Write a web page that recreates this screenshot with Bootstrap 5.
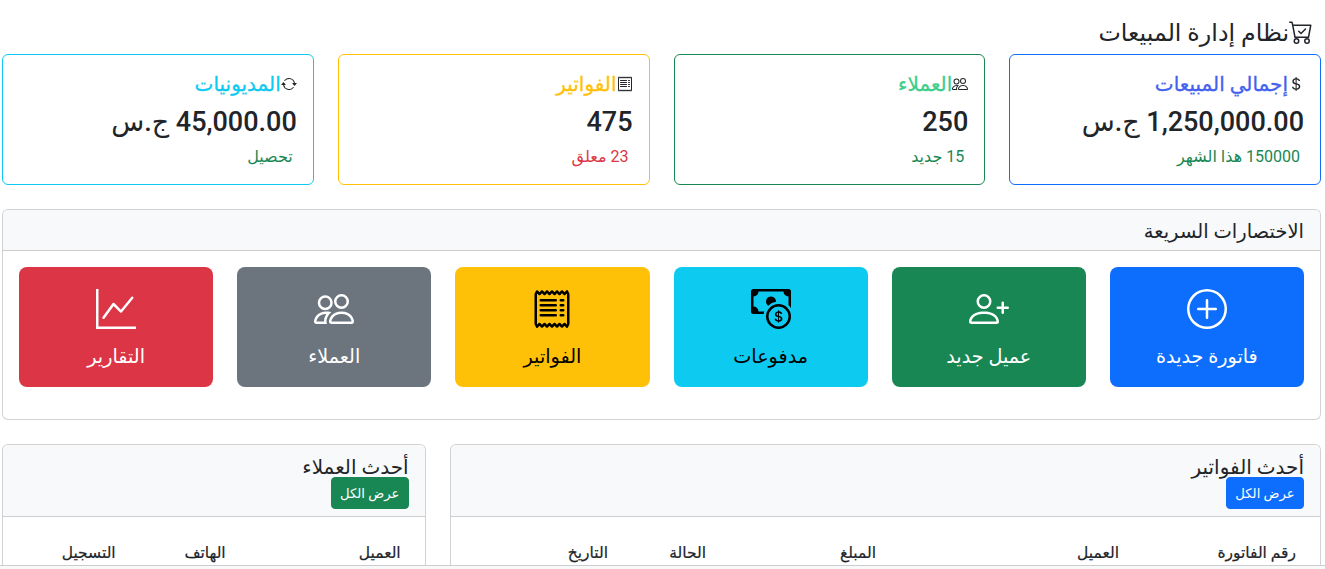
<!DOCTYPE html>
<html lang="ar" dir="rtl">
<head>
<meta charset="utf-8">
<title>نظام إدارة المبيعات</title>
<link href="https://cdn.jsdelivr.net/npm/bootstrap@5.3.0/dist/css/bootstrap.min.css" rel="stylesheet">
<style>
html,body{height:569px;overflow:hidden}
body{font-family:Roboto,"DejaVu Sans",sans-serif;background:#fff}
.page-wrap{padding:17px 4px 0 2px}
.page-wrap>.row{--bs-gutter-x:24px}
.page-title{font-size:23.75px;font-weight:500;margin:0 0 8px;padding:0 8px;line-height:29px;display:flex;align-items:center}
.page-title .ic{font-size:24px}
.title-text{line-height:25px;padding-top:4px}
.ic{width:1em;height:1em;fill:currentColor;flex:none}
.stat-card{height:131px}
.stat-title{font-size:20px;font-weight:500;line-height:24px;padding-top:1px;margin-bottom:7px;display:flex;align-items:center;-webkit-text-stroke:.3px currentColor}
.stat-title .ic{font-size:16px;color:#212529;-webkit-text-stroke:0}
.tone-blue{color:#4361ee}
.tone-green{color:#3ccf8a}
.tone-amber{color:#ffc107}
.tone-sky{color:#0dcaf0}
.stat-num{font-size:27px;font-weight:500;line-height:34px;padding-top:2px;margin-bottom:6px}
.stat-note{font-size:16px;line-height:21px;padding:1px 4px 0}
.quick-card{height:211px;margin-top:24px}
.quick-card .card-header{font-size:19.5px;font-weight:500;line-height:24px;padding:10px 16px 6px;background:#f8f9fa}
.quick-btn{display:flex;flex-direction:column;align-items:center;justify-content:flex-start;height:120px;padding-top:22px;font-size:19.2px;line-height:28px;border:0;border-radius:8px}
.quick-btn .ic{font-size:40px;margin-bottom:14px}
.list-head{font-size:20px;font-weight:500;line-height:24px;padding-top:10px;padding-bottom:7px;background:#f8f9fa}
.list-head .btn{display:block;width:78px;height:32px;margin-top:-2px;padding:0;font-size:13.2px;line-height:32px;text-align:center}
.data-table{font-size:15.5px;line-height:24px;margin:0;table-layout:fixed}
.data-table th{border-bottom:0;font-weight:500;padding-top:8px;padding-bottom:8px;-webkit-text-stroke:.2px currentColor}
.inv-table th:nth-child(1){width:177px}
.inv-table th:nth-child(2){width:243px}
.inv-table th:nth-child(3){width:170px}
.inv-table th:nth-child(4){width:98px}
.cust-table th:nth-child(1){width:175px}
.cust-table th:nth-child(2){width:110px}
.page-foot{position:fixed;left:0;right:0;bottom:0;height:4px;background:#f8f9fa;border-top:1px solid #ccc}
</style>
</head>
<body>
<div class="page-wrap">
  <h1 class="page-title">
    <svg class="ic" viewBox="0 0 16 16"><path d="M11.354 6.354a.5.5 0 0 0-.708-.708L8 8.293 6.854 7.146a.5.5 0 1 0-.708.708l1.5 1.5a.5.5 0 0 0 .708 0l3-3z"/><path d="M.5 1a.5.5 0 0 0 0 1h1.11l.401 1.607 1.498 7.985A.5.5 0 0 0 4 12h1a2 2 0 1 0 0 4 2 2 0 0 0 0-4h7a2 2 0 1 0 0 4 2 2 0 0 0 0-4h1a.5.5 0 0 0 .491-.408l1.5-8A.5.5 0 0 0 14.5 3H2.89l-.405-1.621A.5.5 0 0 0 2 1H.5zm3.915 10L3.102 4h10.796l-1.313 7h-8.17zM6 14a1 1 0 1 1-2 0 1 1 0 0 1 2 0zm7 0a1 1 0 1 1-2 0 1 1 0 0 1 2 0z"/></svg>
    <span class="title-text">نظام إدارة المبيعات</span>
  </h1>
  <div class="row">
    <div class="col-3">
      <div class="card border-primary stat-card"><div class="card-body">
        <div class="stat-title tone-blue"><svg class="ic" viewBox="0 0 16 16"><path d="M4 10.781c.148 1.667 1.513 2.85 3.591 3.003V15h1.043v-1.216c2.27-.179 3.678-1.438 3.678-3.3 0-1.59-.947-2.51-2.956-3.028l-.722-.187V3.467c1.122.11 1.879.714 2.07 1.616h1.47c-.166-1.6-1.54-2.748-3.54-2.875V1H7.591v1.233c-1.939.23-3.27 1.472-3.27 3.156 0 1.454.966 2.483 2.661 2.917l.61.162v4.031c-1.149-.17-1.94-.8-2.131-1.718H4zm3.391-3.836c-1.043-.263-1.6-.825-1.6-1.616 0-.944.704-1.641 1.8-1.828v3.495l-.2-.05zm1.591 1.872c1.287.323 1.852.859 1.852 1.769 0 1.097-.826 1.828-2.2 1.939V8.73l.348.086z"/></svg>إجمالي المبيعات</div>
        <div class="stat-num">1,250,000.00 ج.س</div>
        <div class="stat-note text-success">150000 هذا الشهر</div>
      </div></div>
    </div>
    <div class="col-3">
      <div class="card border-success stat-card"><div class="card-body">
        <div class="stat-title tone-green"><svg class="ic" viewBox="0 0 16 16"><path d="M15 14s1 0 1-1-1-4-5-4-5 3-5 4 1 1 1 1h8Zm-7.978-1A.261.261 0 0 1 7 12.996c.001-.264.167-1.03.76-1.72C8.312 10.629 9.282 10 11 10c1.717 0 2.687.63 3.24 1.276.593.69.758 1.457.76 1.72l-.008.002a.274.274 0 0 1-.014.002H7.022ZM11 7a2 2 0 1 0 0-4 2 2 0 0 0 0 4Zm3-2a3 3 0 1 1-6 0 3 3 0 0 1 6 0ZM6.936 9.28a5.88 5.88 0 0 0-1.23-.247A7.35 7.35 0 0 0 5 9c-4 0-5 3-5 4 0 .667.333 1 1 1h4.216A2.238 2.238 0 0 1 5 13c0-1.01.377-2.042 1.09-2.904.243-.294.526-.569.846-.816ZM4.92 10A5.493 5.493 0 0 0 4 13H1c0-.26.164-1.03.76-1.724.545-.636 1.492-1.256 3.16-1.275ZM1.5 5.5a3 3 0 1 1 6 0 3 3 0 0 1-6 0Zm3-2a2 2 0 1 0 0 4 2 2 0 0 0 0-4Z"/></svg>العملاء</div>
        <div class="stat-num">250</div>
        <div class="stat-note text-success">15 جديد</div>
      </div></div>
    </div>
    <div class="col-3">
      <div class="card border-warning stat-card"><div class="card-body">
        <div class="stat-title tone-amber"><svg class="ic" viewBox="0 0 16 16"><use href="#receipt"/></svg>الفواتير</div>
        <div class="stat-num">475</div>
        <div class="stat-note text-danger">23 معلق</div>
      </div></div>
    </div>
    <div class="col-3">
      <div class="card border-info stat-card"><div class="card-body">
        <div class="stat-title tone-sky"><svg class="ic" viewBox="0 0 16 16"><path d="M11.534 7h3.932a.25.25 0 0 1 .192.41l-1.966 2.36a.25.25 0 0 1-.384 0l-1.966-2.36a.25.25 0 0 1 .192-.41zm-11 2h3.932a.25.25 0 0 0 .192-.41L2.692 6.23a.25.25 0 0 0-.384 0L.342 8.59A.25.25 0 0 0 .534 9z"/><path d="M8 3c-1.552 0-2.94.707-3.857 1.818a.5.5 0 1 1-.771-.636A6.002 6.002 0 0 1 13.917 7H12.9A5.002 5.002 0 0 0 8 3zM3.1 9a5.002 5.002 0 0 0 8.757 2.182.5.5 0 1 1 .771.636A6.002 6.002 0 0 1 2.083 9H3.1z"/></svg>المديونيات</div>
        <div class="stat-num">45,000.00 ج.س</div>
        <div class="stat-note text-success">تحصيل</div>
      </div></div>
    </div>
  </div>
  <div class="card quick-card">
    <div class="card-header">الاختصارات السريعة</div>
    <div class="card-body"><div class="row g-4">
      <div class="col-2"><a class="btn btn-primary quick-btn" href="#"><svg class="ic" viewBox="0 0 16 16"><path d="M8 15A7 7 0 1 1 8 1a7 7 0 0 1 0 14zm0 1A8 8 0 1 0 8 0a8 8 0 0 0 0 16z"/><path d="M8 4a.5.5 0 0 1 .5.5v3h3a.5.5 0 0 1 0 1h-3v3a.5.5 0 0 1-1 0v-3h-3a.5.5 0 0 1 0-1h3v-3A.5.5 0 0 1 8 4z"/></svg>فاتورة جديدة</a></div>
      <div class="col-2"><a class="btn btn-success quick-btn" href="#"><svg class="ic" viewBox="0 0 16 16"><path d="M6 8a3 3 0 1 0 0-6 3 3 0 0 0 0 6zm2-3a2 2 0 1 1-4 0 2 2 0 0 1 4 0zm4 8c0 1-1 1-1 1H1s-1 0-1-1 1-4 6-4 6 3 6 4zm-1-.004c-.001-.246-.154-.986-.832-1.664C9.516 10.68 8.289 10 6 10c-2.29 0-3.516.68-4.168 1.332-.678.678-.83 1.418-.832 1.664h10z"/><path fill-rule="evenodd" d="M13.5 5a.5.5 0 0 1 .5.5V7h1.5a.5.5 0 0 1 0 1H14v1.5a.5.5 0 0 1-1 0V8h-1.5a.5.5 0 0 1 0-1H13V5.5a.5.5 0 0 1 .5-.5z"/></svg>عميل جديد</a></div>
      <div class="col-2"><a class="btn btn-info quick-btn" href="#"><svg class="ic" viewBox="0 0 16 16"><path fill-rule="evenodd" d="M11 15a4 4 0 1 0 0-8 4 4 0 0 0 0 8zm5-4a5 5 0 1 1-10 0 5 5 0 0 1 10 0z"/><path d="M9.438 11.944c.047.596.518 1.06 1.363 1.116v.44h.375v-.443c.875-.061 1.386-.529 1.386-1.207 0-.618-.39-.936-1.09-1.1l-.296-.07v-1.2c.376.043.614.248.671.532h.658c-.047-.575-.54-1.024-1.329-1.073V8.5h-.375v.45c-.747.073-1.255.522-1.255 1.158 0 .562.378.92 1.007 1.066l.248.061v1.272c-.384-.058-.639-.27-.696-.563h-.668zm1.36-1.354c-.369-.085-.569-.26-.569-.522 0-.294.216-.514.572-.578v1.1h-.003zm.432.746c.449.104.655.272.655.569 0 .339-.257.571-.709.614v-1.195l.054.012z"/><path d="M1 0a1 1 0 0 0-1 1v8a1 1 0 0 0 1 1h4.083c.058-.344.145-.678.258-1H3a2 2 0 0 0-2-2V3a2 2 0 0 0 2-2h10a2 2 0 0 0 2 2v3.528c.38.34.717.728 1 1.154V1a1 1 0 0 0-1-1H1z"/><path d="M9.998 5.083 10 5a2 2 0 1 0-3.132 1.65 5.982 5.982 0 0 1 3.13-1.567z"/></svg>مدفوعات</a></div>
      <div class="col-2"><a class="btn btn-warning quick-btn" href="#"><svg class="ic" viewBox="0 0 16 16"><g id="receipt"><path d="M1.92.506a.5.5 0 0 1 .434.14L3 1.293l.646-.647a.5.5 0 0 1 .708 0L5 1.293l.646-.647a.5.5 0 0 1 .708 0L7 1.293l.646-.647a.5.5 0 0 1 .708 0L9 1.293l.646-.647a.5.5 0 0 1 .708 0l.646.647.646-.647a.5.5 0 0 1 .708 0l.646.647.646-.647a.5.5 0 0 1 .801.13l.5 1A.5.5 0 0 1 15 2v12a.5.5 0 0 1-.053.224l-.5 1a.5.5 0 0 1-.8.13L13 14.707l-.646.647a.5.5 0 0 1-.708 0L11 14.707l-.646.647a.5.5 0 0 1-.708 0L9 14.707l-.646.647a.5.5 0 0 1-.708 0L7 14.707l-.646.647a.5.5 0 0 1-.708 0L5 14.707l-.646.647a.5.5 0 0 1-.708 0L3 14.707l-.646.647a.5.5 0 0 1-.801-.13l-.5-1A.5.5 0 0 1 1 14V2a.5.5 0 0 1 .053-.224l.5-1a.5.5 0 0 1 .367-.27zm.217 1.338L2 2.118v11.764l.137.274.51-.51a.5.5 0 0 1 .707 0l.646.647.646-.646a.5.5 0 0 1 .708 0l.646.646.646-.646a.5.5 0 0 1 .708 0l.646.646.646-.646a.5.5 0 0 1 .708 0l.646.646.646-.646a.5.5 0 0 1 .708 0l.646.646.646-.646a.5.5 0 0 1 .708 0l.509.509.137-.274V2.118l-.137-.274-.51.51a.5.5 0 0 1-.707 0L12 1.707l-.646.647a.5.5 0 0 1-.708 0L10 1.707l-.646.647a.5.5 0 0 1-.708 0L8 1.707l-.646.647a.5.5 0 0 1-.708 0L6 1.707l-.646.647a.5.5 0 0 1-.708 0L4 1.707l-.646.647a.5.5 0 0 1-.708 0l-.509-.51z"/><path d="M3 4.5a.5.5 0 0 1 .5-.5h6a.5.5 0 1 1 0 1h-6a.5.5 0 0 1-.5-.5zm0 2a.5.5 0 0 1 .5-.5h6a.5.5 0 1 1 0 1h-6a.5.5 0 0 1-.5-.5zm0 2a.5.5 0 0 1 .5-.5h6a.5.5 0 1 1 0 1h-6a.5.5 0 0 1-.5-.5zm0 2a.5.5 0 0 1 .5-.5h6a.5.5 0 0 1 0 1h-6a.5.5 0 0 1-.5-.5zm8-6a.5.5 0 0 1 .5-.5h1a.5.5 0 0 1 0 1h-1a.5.5 0 0 1-.5-.5zm0 2a.5.5 0 0 1 .5-.5h1a.5.5 0 0 1 0 1h-1a.5.5 0 0 1-.5-.5zm0 2a.5.5 0 0 1 .5-.5h1a.5.5 0 0 1 0 1h-1a.5.5 0 0 1-.5-.5zm0 2a.5.5 0 0 1 .5-.5h1a.5.5 0 0 1 0 1h-1a.5.5 0 0 1-.5-.5z"/></g></svg>الفواتير</a></div>
      <div class="col-2"><a class="btn btn-secondary quick-btn" href="#"><svg class="ic" viewBox="0 0 16 16"><path d="M15 14s1 0 1-1-1-4-5-4-5 3-5 4 1 1 1 1h8Zm-7.978-1A.261.261 0 0 1 7 12.996c.001-.264.167-1.03.76-1.72C8.312 10.629 9.282 10 11 10c1.717 0 2.687.63 3.24 1.276.593.69.758 1.457.76 1.72l-.008.002a.274.274 0 0 1-.014.002H7.022ZM11 7a2 2 0 1 0 0-4 2 2 0 0 0 0 4Zm3-2a3 3 0 1 1-6 0 3 3 0 0 1 6 0ZM6.936 9.28a5.88 5.88 0 0 0-1.23-.247A7.35 7.35 0 0 0 5 9c-4 0-5 3-5 4 0 .667.333 1 1 1h4.216A2.238 2.238 0 0 1 5 13c0-1.01.377-2.042 1.09-2.904.243-.294.526-.569.846-.816ZM4.92 10A5.493 5.493 0 0 0 4 13H1c0-.26.164-1.03.76-1.724.545-.636 1.492-1.256 3.16-1.275ZM1.5 5.5a3 3 0 1 1 6 0 3 3 0 0 1-6 0Zm3-2a2 2 0 1 0 0 4 2 2 0 0 0 0-4Z"/></svg>العملاء</a></div>
      <div class="col-2"><a class="btn btn-danger quick-btn" href="#"><svg class="ic" viewBox="0 0 16 16"><path fill-rule="evenodd" d="M0 0h1v15h15v1H0V0Zm14.817 3.113a.5.5 0 0 1 .07.704l-4.5 5.5a.5.5 0 0 1-.74.037L7.06 6.767l-3.656 5.027a.5.5 0 0 1-.808-.588l4-5.5a.5.5 0 0 1 .758-.06l2.609 2.61 4.15-5.073a.5.5 0 0 1 .704-.07Z"/></svg>التقارير</a></div>
    </div></div>
  </div>
  <div class="row mt-4">
    <div class="col-8">
      <div class="card">
        <div class="card-header list-head">أحدث الفواتير<a class="btn btn-primary btn-sm" href="#">عرض الكل</a></div>
        <div class="card-body"><table class="table data-table inv-table"><thead><tr><th>رقم الفاتورة</th><th>العميل</th><th>المبلغ</th><th>الحالة</th><th>التاريخ</th></tr></thead></table></div>
      </div>
    </div>
    <div class="col-4">
      <div class="card">
        <div class="card-header list-head">أحدث العملاء<a class="btn btn-success btn-sm" href="#">عرض الكل</a></div>
        <div class="card-body"><table class="table data-table cust-table"><thead><tr><th>العميل</th><th>الهاتف</th><th>التسجيل</th></tr></thead></table></div>
      </div>
    </div>
  </div>
</div>
<div class="page-foot"></div>
<script src="https://cdn.jsdelivr.net/npm/bootstrap@5.3.0/dist/js/bootstrap.bundle.min.js"></script>
</body>
</html>
